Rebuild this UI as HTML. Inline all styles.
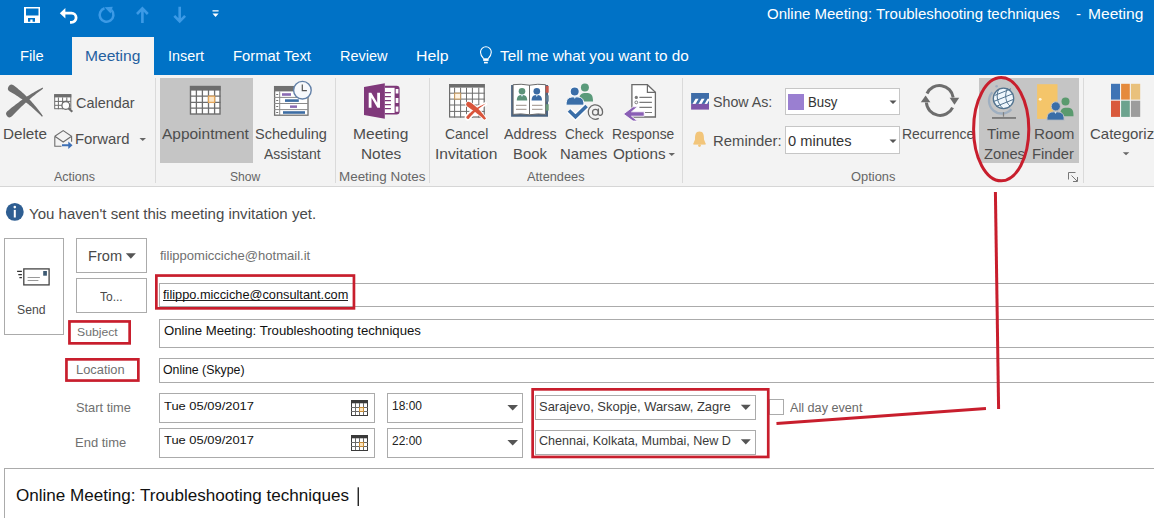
<!DOCTYPE html>
<html><head><meta charset="utf-8"><style>
html,body{margin:0;padding:0;width:1154px;height:518px;overflow:hidden;background:#fff;}
body{position:relative;font-family:"Liberation Sans",sans-serif;}
.b{position:absolute;}
.t{position:absolute;white-space:nowrap;transform-origin:0 0;}
svg{position:absolute;left:0;top:0;}
</style></head><body>
<div class="b" style="left:0px;top:0px;width:1154px;height:75px;background:#0072C6"></div>
<div class="b" style="left:72px;top:37px;width:82px;height:38px;background:#F3F3F3"></div>
<div class="b" style="left:0px;top:75px;width:1154px;height:111px;background:#F3F3F3"></div>
<div class="b" style="left:0px;top:186px;width:1154px;height:1px;background:#D6D6D6"></div>
<div class="b" style="left:155px;top:78px;width:1px;height:105px;background:#DADADA"></div>
<div class="b" style="left:335px;top:78px;width:1px;height:105px;background:#DADADA"></div>
<div class="b" style="left:429px;top:78px;width:1px;height:105px;background:#DADADA"></div>
<div class="b" style="left:682px;top:78px;width:1px;height:105px;background:#DADADA"></div>
<div class="b" style="left:1083px;top:78px;width:1px;height:105px;background:#DADADA"></div>
<div class="b" style="left:160px;top:78px;width:93px;height:85px;background:#C5C5C5"></div>
<div class="b" style="left:979px;top:78px;width:100px;height:85px;background:#C5C5C5"></div>
<div class="b" style="left:785px;top:88px;width:115px;height:27px;background:#fff;border:1px solid #C6C6C6;box-sizing:border-box"></div>
<div class="b" style="left:785px;top:126px;width:115px;height:28px;background:#fff;border:1px solid #C6C6C6;box-sizing:border-box"></div>
<div class="b" style="left:788px;top:94px;width:16px;height:16px;background:#9A7FD1"></div>
<div class="b" style="left:4px;top:238px;width:60px;height:97px;box-sizing:border-box;background:#fff;border:1px solid #ABABAB"></div>
<div class="b" style="left:76px;top:238px;width:71px;height:35px;box-sizing:border-box;background:#fff;border:1px solid #ABABAB"></div>
<div class="b" style="left:76px;top:278px;width:71px;height:35px;box-sizing:border-box;background:#fff;border:1px solid #ABABAB"></div>
<div class="b" style="left:159px;top:283px;width:1000px;height:24px;box-sizing:border-box;background:#fff;border:1px solid #ABABAB"></div>
<div class="b" style="left:159px;top:319px;width:1000px;height:29px;box-sizing:border-box;background:#fff;border:1px solid #ABABAB"></div>
<div class="b" style="left:159px;top:358px;width:1000px;height:25px;box-sizing:border-box;background:#fff;border:1px solid #ABABAB"></div>
<div class="b" style="left:159px;top:393px;width:216px;height:30px;box-sizing:border-box;background:#fff;border:1px solid #ABABAB"></div>
<div class="b" style="left:159px;top:428px;width:216px;height:30px;box-sizing:border-box;background:#fff;border:1px solid #ABABAB"></div>
<div class="b" style="left:387px;top:393px;width:136px;height:30px;box-sizing:border-box;background:#fff;border:1px solid #ABABAB"></div>
<div class="b" style="left:387px;top:428px;width:136px;height:30px;box-sizing:border-box;background:#fff;border:1px solid #ABABAB"></div>
<div class="b" style="left:535px;top:395px;width:221px;height:25px;box-sizing:border-box;background:#fff;border:1px solid #ABABAB"></div>
<div class="b" style="left:535px;top:430px;width:221px;height:25px;box-sizing:border-box;background:#fff;border:1px solid #ABABAB"></div>
<div class="b" style="left:769px;top:399px;width:15px;height:16px;box-sizing:border-box;background:#fff;border:1px solid #ABABAB"></div>
<div class="b" style="left:163px;top:300px;width:184.6px;height:1.1px;background:#222"></div>
<div class="b" style="left:4px;top:468px;width:1160px;height:60px;box-sizing:border-box;border:1px solid #ABABAB;border-right:none;border-bottom:none"></div>
<div class="t" style="left:767.00px;top:6.00px;font-size:15px;line-height:15px;color:#ffffff;">Online Meeting: Troubleshooting techniques</div>
<div class="t" style="left:1076.00px;top:6.00px;font-size:15px;line-height:15px;color:#ffffff;">-</div>
<div class="t" style="left:1087.96px;top:6.00px;font-size:15px;line-height:15px;color:#ffffff;transform:scaleX(1.0380);">Meeting</div>
<div class="t" style="left:20.32px;top:48.00px;font-size:15px;line-height:15px;color:#ffffff;transform:scaleX(0.9813);">File</div>
<div class="t" style="left:84.56px;top:48.00px;font-size:15px;line-height:15px;color:#2560A0;transform:scaleX(1.0380);">Meeting</div>
<div class="t" style="left:168.04px;top:48.00px;font-size:15px;line-height:15px;color:#ffffff;transform:scaleX(0.9586);">Insert</div>
<div class="t" style="left:232.91px;top:48.00px;font-size:15px;line-height:15px;color:#ffffff;transform:scaleX(0.9872);">Format Text</div>
<div class="t" style="left:340.33px;top:48.00px;font-size:15px;line-height:15px;color:#ffffff;transform:scaleX(0.9679);">Review</div>
<div class="t" style="left:416.04px;top:48.00px;font-size:15px;line-height:15px;color:#ffffff;transform:scaleX(1.0574);">Help</div>
<div class="t" style="left:499.50px;top:48.00px;font-size:15px;line-height:15px;color:#ffffff;transform:scaleX(1.0203);">Tell me what you want to do</div>
<div class="t" style="left:2.58px;top:126.00px;font-size:15px;line-height:15px;color:#4d4d4d;transform:scaleX(1.0163);">Delete</div>
<div class="t" style="left:76.00px;top:95.00px;font-size:15px;line-height:15px;color:#4d4d4d;transform:scaleX(0.9626);">Calendar</div>
<div class="t" style="left:75.41px;top:131.00px;font-size:15px;line-height:15px;color:#4d4d4d;transform:scaleX(0.9912);">Forward</div>
<div class="t" style="left:54.40px;top:171.00px;font-size:12px;line-height:12px;color:#666666;transform:scaleX(1.0419);">Actions</div>
<div class="t" style="left:162.20px;top:126.00px;font-size:15px;line-height:15px;color:#4d4d4d;transform:scaleX(1.0311);">Appointment</div>
<div class="t" style="left:255.40px;top:126.00px;font-size:15px;line-height:15px;color:#4d4d4d;transform:scaleX(0.9691);">Scheduling</div>
<div class="t" style="left:263.50px;top:146.00px;font-size:15px;line-height:15px;color:#4d4d4d;transform:scaleX(0.9321);">Assistant</div>
<div class="t" style="left:230.00px;top:171.00px;font-size:12px;line-height:12px;color:#666666;transform:scaleX(1.0115);">Show</div>
<div class="t" style="left:352.96px;top:126.00px;font-size:15px;line-height:15px;color:#4d4d4d;transform:scaleX(1.0380);">Meeting</div>
<div class="t" style="left:360.97px;top:146.00px;font-size:15px;line-height:15px;color:#4d4d4d;transform:scaleX(1.0269);">Notes</div>
<div class="t" style="left:339.00px;top:171.00px;font-size:12px;line-height:12px;color:#666666;transform:scaleX(1.1180);">Meeting Notes</div>
<div class="t" style="left:445.00px;top:126.00px;font-size:15px;line-height:15px;color:#4d4d4d;transform:scaleX(0.9275);">Cancel</div>
<div class="t" style="left:434.96px;top:146.00px;font-size:15px;line-height:15px;color:#4d4d4d;transform:scaleX(1.0393);">Invitation</div>
<div class="t" style="left:503.50px;top:126.00px;font-size:15px;line-height:15px;color:#4d4d4d;transform:scaleX(0.9555);">Address</div>
<div class="t" style="left:513.01px;top:146.00px;font-size:15px;line-height:15px;color:#4d4d4d;transform:scaleX(0.9944);">Book</div>
<div class="t" style="left:565.00px;top:126.00px;font-size:15px;line-height:15px;color:#4d4d4d;transform:scaleX(0.9066);">Check</div>
<div class="t" style="left:560.01px;top:146.00px;font-size:15px;line-height:15px;color:#4d4d4d;transform:scaleX(0.9910);">Names</div>
<div class="t" style="left:612.08px;top:126.00px;font-size:15px;line-height:15px;color:#4d4d4d;transform:scaleX(0.9214);">Response</div>
<div class="t" style="left:613.00px;top:146.00px;font-size:15px;line-height:15px;color:#4d4d4d;transform:scaleX(1.0157);">Options</div>
<div class="t" style="left:527.00px;top:171.00px;font-size:12px;line-height:12px;color:#666666;transform:scaleX(1.0659);">Attendees</div>
<div class="t" style="left:713.00px;top:94.00px;font-size:15px;line-height:15px;color:#4d4d4d;transform:scaleX(0.9486);">Show As:</div>
<div class="t" style="left:807.72px;top:94.00px;font-size:15px;line-height:15px;color:#333333;transform:scaleX(0.8829);">Busy</div>
<div class="t" style="left:712.61px;top:133.00px;font-size:15px;line-height:15px;color:#4d4d4d;transform:scaleX(0.9907);">Reminder:</div>
<div class="t" style="left:788.40px;top:133.00px;font-size:15px;line-height:15px;color:#333333;transform:scaleX(0.9763);">0 minutes</div>
<div class="t" style="left:851.00px;top:171.00px;font-size:12px;line-height:12px;color:#666666;transform:scaleX(1.0736);">Options</div>
<div class="t" style="left:902.47px;top:126.00px;font-size:15px;line-height:15px;color:#4d4d4d;transform:scaleX(0.9319);">Recurrence</div>
<div class="t" style="left:987.00px;top:126.00px;font-size:15px;line-height:15px;color:#4d4d4d;transform:scaleX(1.0082);">Time</div>
<div class="t" style="left:983.80px;top:146.00px;font-size:15px;line-height:15px;color:#4d4d4d;transform:scaleX(0.9833);">Zones</div>
<div class="t" style="left:1033.69px;top:126.00px;font-size:15px;line-height:15px;color:#4d4d4d;transform:scaleX(1.0125);">Room</div>
<div class="t" style="left:1032.01px;top:146.00px;font-size:15px;line-height:15px;color:#4d4d4d;transform:scaleX(0.9874);">Finder</div>
<div class="t" style="left:1090.00px;top:126.00px;font-size:15px;line-height:15px;color:#4d4d4d;">Categorize</div>
<div class="t" style="left:29.30px;top:207.00px;font-size:14.7px;line-height:14.7px;color:#4a4a4a;transform:scaleX(1.0229);">You haven't sent this meeting invitation yet.</div>
<div class="t" style="left:87.59px;top:249.00px;font-size:14.5px;line-height:14.5px;color:#4a4a4a;transform:scaleX(1.0076);">From</div>
<div class="t" style="left:160.00px;top:250.00px;font-size:12.4px;line-height:12.4px;color:#707070;transform:scaleX(1.0524);">filippomicciche@hotmail.it</div>
<div class="t" style="left:100.10px;top:291.00px;font-size:12.5px;line-height:12.5px;color:#4a4a4a;transform:scaleX(0.9591);">To...</div>
<div class="t" style="left:163.00px;top:289.00px;font-size:12.8px;line-height:12.8px;color:#111111;transform:scaleX(0.9970);">filippo.micciche@consultant.com</div>
<div class="t" style="left:76.50px;top:327.00px;font-size:11.8px;line-height:11.8px;color:#707070;transform:scaleX(1.0332);">Subject</div>
<div class="t" style="left:163.80px;top:325.00px;font-size:12.9px;line-height:12.9px;color:#111111;transform:scaleX(1.0214);">Online Meeting: Troubleshooting techniques</div>
<div class="t" style="left:76.40px;top:364.00px;font-size:12px;line-height:12px;color:#707070;transform:scaleX(1.0717);">Location</div>
<div class="t" style="left:163.00px;top:364.00px;font-size:12.5px;line-height:12.5px;color:#111111;transform:scaleX(0.9866);">Online (Skype)</div>
<div class="t" style="left:76.40px;top:402.00px;font-size:12.4px;line-height:12.4px;color:#707070;transform:scaleX(1.0353);">Start time</div>
<div class="t" style="left:75.33px;top:437.00px;font-size:12.2px;line-height:12.2px;color:#707070;transform:scaleX(1.0651);">End time</div>
<div class="t" style="left:163.60px;top:401.00px;font-size:11.8px;line-height:11.8px;color:#111111;transform:scaleX(1.0937);">Tue 05/09/2017</div>
<div class="t" style="left:163.60px;top:435.00px;font-size:11.8px;line-height:11.8px;color:#111111;transform:scaleX(1.0937);">Tue 05/09/2017</div>
<div class="t" style="left:391.90px;top:400.00px;font-size:12.1px;line-height:12.1px;color:#222222;transform:scaleX(0.9889);">18:00</div>
<div class="t" style="left:391.90px;top:435.00px;font-size:12.1px;line-height:12.1px;color:#222222;transform:scaleX(0.9889);">22:00</div>
<div class="b" style="left:539.00px;top:397.00px;width:192.20px;height:20.2px;overflow:hidden"><div class="t" style="left:0.00px;top:4px;font-size:12.2px;line-height:12.2px;color:#3a3a3a;transform:scaleX(1.0630);">Sarajevo, Skopje, Warsaw, Zagreb</div></div>
<div class="b" style="left:539.00px;top:431.00px;width:192.20px;height:20.2px;overflow:hidden"><div class="t" style="left:0.00px;top:4px;font-size:12.2px;line-height:12.2px;color:#3a3a3a;transform:scaleX(1.0300);">Chennai, Kolkata, Mumbai, New Delhi</div></div>
<div class="t" style="left:789.60px;top:402.00px;font-size:12px;line-height:12px;color:#6a6a6a;transform:scaleX(1.0537);">All day event</div>
<div class="t" style="left:17.30px;top:304.00px;font-size:12.6px;line-height:12.6px;color:#4a4a4a;transform:scaleX(0.9691);">Send</div>
<div class="t" style="left:15.50px;top:488.00px;font-size:16.8px;line-height:16.8px;color:#111111;transform:scaleX(1.0172);">Online Meeting: Troubleshooting techniques</div>
<svg width="1154" height="518" viewBox="0 0 1154 518">
<!-- QAT: save -->
<g fill="#fff">
<path d="M24 7h16v16h-16z M26 8.5v7h12.5v-7z M28 18v3.8h2.3v-2.3h2.3v2.3h2.4v-3.8z" fill-rule="evenodd"/>
</g>
<!-- undo -->
<path d="M62 13.2h9.5a4.6 4.6 0 0 1 0 9.2h-1.5" fill="none" stroke="#fff" stroke-width="2.8"/>
<path d="M59.8 13.2l5.6-5.3v10.6z" fill="#fff"/>
<!-- redo faded -->
<path d="M111.6 10.2 A 6.9 6.9 0 1 1 104.5 8.3" fill="none" stroke="#3C9AE6" stroke-width="2.5"/>
<path d="M104.6 7.2 L112.8 6.8 L110.6 13.6z" fill="#3C9AE6"/>
<!-- up/down faded -->
<g stroke="#3C9AE6" stroke-width="2.6" fill="none">
<path d="M142.4 8.5v14.5 M137 14l5.4-5.6 5.4 5.6"/>
<path d="M179.7 6.7v14.5 M174.3 15.9l5.4 5.6 5.4-5.6"/>
</g>
<!-- customize -->
<path d="M212.5 10.3h6.1v1.3h-6.1z M212.5 13.6h6.1l-3.05 3.4z" fill="#fff"/>

<!-- bulb -->
<path d="M483.6 58.6 C 482 56.8, 480.5 55, 480.5 52.2 A 5.4 5.4 0 0 1 491.3 52.2 C 491.3 55, 489.8 56.8, 488.2 58.6" fill="none" stroke="#fff" stroke-width="1.1"/>
<rect x="483.2" y="58.3" width="5.4" height="2.6" fill="#fff"/>
<rect x="484" y="61.8" width="3.8" height="1.6" fill="#fff"/>

<!-- Delete X -->
<path d="M9.67 91.44 L11.00 92.19 L12.33 92.96 L13.66 93.76 L14.99 94.58 L16.32 95.43 L17.66 96.31 L19.00 97.21 L20.34 98.14 L21.68 99.10 L23.02 100.08 L24.36 101.09 L25.71 102.13 L27.05 103.19 L28.40 104.28 L29.75 105.40 L31.10 106.55 L32.45 107.72 L33.80 108.92 L35.16 110.14 L36.51 111.40 L37.87 112.68 L39.22 113.99 L40.58 115.32 L41.94 116.69 L42.86 115.91 L41.73 114.34 L40.60 112.79 L39.45 111.26 L38.30 109.76 L37.14 108.29 L35.97 106.85 L34.80 105.43 L33.61 104.03 L32.42 102.66 L31.22 101.32 L30.01 100.01 L28.79 98.72 L27.57 97.46 L26.33 96.22 L25.09 95.02 L23.84 93.83 L22.58 92.68 L21.32 91.55 L20.04 90.45 L18.75 89.38 L17.46 88.33 L16.16 87.31 L14.85 86.32 L13.53 85.36 A 3.60 3.60 0 0 0 9.67 91.44 Z" fill="#6F6F6F"/>
<path d="M11.96 116.25 L13.15 114.97 L14.36 113.70 L15.57 112.45 L16.79 111.20 L18.02 109.97 L19.26 108.74 L20.51 107.53 L21.77 106.33 L23.04 105.14 L24.31 103.96 L25.59 102.79 L26.89 101.64 L28.19 100.49 L29.50 99.35 L30.82 98.23 L32.15 97.12 L33.48 96.02 L34.83 94.93 L36.19 93.85 L37.55 92.78 L38.93 91.72 L40.31 90.67 L41.71 89.64 L43.11 88.61 L42.49 87.59 L40.93 88.39 L39.39 89.22 L37.85 90.05 L36.31 90.91 L34.79 91.78 L33.27 92.66 L31.76 93.56 L30.25 94.48 L28.76 95.42 L27.27 96.37 L25.79 97.33 L24.31 98.31 L22.85 99.31 L21.39 100.33 L19.94 101.36 L18.50 102.40 L17.06 103.47 L15.64 104.54 L14.22 105.64 L12.81 106.75 L11.40 107.87 L10.01 109.02 L8.62 110.17 L7.24 111.35 A 3.40 3.40 0 0 0 11.96 116.25 Z" fill="#6F6F6F"/>

<!-- Calendar small w/ magnifier -->
<rect x="54.7" y="94.7" width="16.1" height="14" fill="#fff" stroke="#6D6D6D" stroke-width="1"/>
<rect x="54.2" y="94.2" width="17.1" height="3.2" fill="#6D6D6D"/>
<g fill="none" stroke="#6D6D6D" stroke-width="1">
<path d="M58.4 97.4v11.8 M62.6 97.4v11.8 M66.8 97.4v4 M54.8 101.4h16 M54.8 105.3h8"/>
</g>
<circle cx="65.8" cy="105.4" r="3.9" stroke="#6D6D6D" stroke-width="1.3" fill="#fff"/>
<path d="M68.5 108.2l3.8 3.6" stroke="#6D6D6D" stroke-width="2.2"/>

<!-- Forward envelope -->
<g fill="none" stroke="#6D6D6D" stroke-width="1.1">
<path d="M54.8 136.3 L63.2 130.6 L71.6 136.3 V141.8 M54.8 136.3 V146.2 H61.5 M54.8 136.3 L63.2 142 L71.6 136.3"/>
</g>
<path d="M62 144.3h6.3v-2.8l4.2 3.8-4.2 3.8v-2.8h-6.3z" fill="#3D6FB5"/>

<!-- Appointment calendar -->
<rect x="190.5" y="86.5" width="29.5" height="27.5" fill="#fff" stroke="#6D6D6D" stroke-width="1.4"/>
<rect x="190" y="86" width="30.5" height="4.6" fill="#6D6D6D"/>
<g stroke="#6D6D6D" stroke-width="1.3">
<path d="M196.4 90v24 M202.4 90v24 M208.5 90v24 M214.6 90v24 M190 96.2h30.5 M190 102.4h30.5 M190 108.2h30.5"/>
</g>
<rect x="208.5" y="96.2" width="6.1" height="6.2" fill="#FDE6C6" stroke="#E4A75C" stroke-width="1.3"/>

<!-- Scheduling assistant -->
<rect x="274.6" y="86.6" width="33.4" height="28.6" fill="#fff" stroke="#707070" stroke-width="1.3"/>
<rect x="274" y="86.1" width="20" height="5.3" fill="#707070"/>
<g stroke="#8A8A8A" stroke-width="1">
<path d="M274 97.4h34 M274 103.5h34 M274 109.6h34 M279.7 91.4v24"/>
</g>
<g stroke="#707070" stroke-width="1">
<path d="M276.2 94.5h2 M276.2 100.5h2 M276.2 106.5h2 M276.2 112.5h2"/>
</g>
<rect x="282" y="93.2" width="9" height="2.6" fill="#8B6BB3"/>
<rect x="285" y="99.3" width="13.8" height="2.6" fill="#3D6DA3"/>
<rect x="290" y="105.4" width="7" height="2.5" fill="#8B6BB3"/>
<rect x="283" y="111.2" width="22" height="2.6" fill="#3D6DA3"/>
<circle cx="302.4" cy="90.2" r="8.8" fill="#F7F9FC" stroke="#6381A8" stroke-width="1.4"/>
<path d="M302.3 84.6v6h4.6" stroke="#555" stroke-width="1.2" fill="none"/>

<!-- OneNote -->
<path d="M384.8 85.8h11.8a3 3 0 0 1 3 3v22.6a3 3 0 0 1 -3 3h-11.8z" fill="#7E3878"/>
<rect x="384.8" y="87.8" width="9.8" height="25.2" fill="#fff"/>
<g stroke="#7E3878" stroke-width="1.3">
<path d="M384.8 92.7h6.1 M384.8 96.6h6.1 M384.8 100.6h6.1 M384.8 104.6h6.1 M384.8 108.6h6.1"/>
</g>
<path d="M395.7 89.1h2.7v4.4h-2.7z M395.7 98h2.7v4.9h-2.7z M395.7 106.4h2.7v5.3h-2.7z" fill="#fff"/>
<path d="M364 87 L384.8 83.2 V118.7 L364 115z" fill="#80397B"/>
<path d="M368.7 107.8V92.7h2.6l5.9 10v-10h2.8v15.1h-2.6l-5.9-10v10z" fill="#fff"/>

<!-- Cancel invitation -->
<rect x="449.6" y="84.6" width="34.6" height="32.4" fill="#fff" stroke="#6D6D6D" stroke-width="1.2"/>
<rect x="449.1" y="84.1" width="35.6" height="3.5" fill="#6D6D6D"/>
<g stroke="#6D6D6D" stroke-width="1">
<path d="M454.6 87.6v30 M460.6 87.6v30 M466.5 87.6v30 M472.4 87.6v30 M478.8 87.6v30 M449.1 93.2h35.6 M449.1 99.1h35.6 M449.1 105h35.6 M449.1 111.4h35.6"/>
</g>
<rect x="454.6" y="93.2" width="6" height="5.9" fill="#FFF3E3" stroke="#C49A62" stroke-width="1.1"/>
<path d="M467.20 106.43 L467.86 106.86 L468.54 107.30 L469.21 107.75 L469.89 108.20 L470.57 108.67 L471.26 109.15 L471.95 109.64 L472.65 110.15 L473.35 110.66 L474.06 111.18 L474.77 111.72 L475.49 112.27 L476.21 112.83 L476.94 113.41 L477.68 113.99 L478.41 114.59 L479.16 115.20 L479.91 115.83 L480.67 116.46 L481.43 117.11 L482.20 117.78 L482.97 118.45 L483.75 119.15 L484.54 119.85 L486.06 118.55 L485.46 117.65 L484.86 116.77 L484.25 115.91 L483.63 115.07 L483.00 114.24 L482.36 113.44 L481.72 112.65 L481.07 111.88 L480.42 111.12 L479.76 110.39 L479.09 109.68 L478.41 108.98 L477.73 108.30 L477.04 107.64 L476.34 107.01 L475.64 106.39 L474.93 105.79 L474.21 105.21 L473.49 104.65 L472.77 104.11 L472.03 103.60 L471.30 103.10 L470.55 102.62 L469.80 102.17 A 2.50 2.50 0 0 0 467.20 106.43 Z" fill="#D9553C" stroke="#fff" stroke-width="1.6" stroke-linejoin="round"/>
<path d="M469.61 118.97 L470.21 118.24 L470.81 117.53 L471.42 116.82 L472.04 116.12 L472.67 115.44 L473.31 114.76 L473.96 114.10 L474.61 113.44 L475.28 112.79 L475.95 112.16 L476.64 111.53 L477.33 110.91 L478.04 110.30 L478.76 109.70 L479.48 109.11 L480.22 108.53 L480.97 107.96 L481.73 107.40 L482.50 106.85 L483.29 106.31 L484.08 105.77 L484.89 105.25 L485.71 104.73 L486.54 104.22 L485.86 102.78 L484.92 103.12 L483.99 103.47 L483.06 103.85 L482.15 104.24 L481.24 104.66 L480.34 105.09 L479.45 105.53 L478.58 106.00 L477.71 106.48 L476.85 106.98 L476.00 107.50 L475.17 108.04 L474.34 108.59 L473.52 109.16 L472.72 109.75 L471.92 110.36 L471.14 110.98 L470.37 111.63 L469.61 112.28 L468.86 112.96 L468.12 113.65 L467.40 114.36 L466.68 115.09 L465.99 115.83 A 2.40 2.40 0 0 0 469.61 118.97 Z" fill="#D9553C" stroke="#fff" stroke-width="1.6" stroke-linejoin="round"/>
<path d="M467.20 106.43 L467.86 106.86 L468.54 107.30 L469.21 107.75 L469.89 108.20 L470.57 108.67 L471.26 109.15 L471.95 109.64 L472.65 110.15 L473.35 110.66 L474.06 111.18 L474.77 111.72 L475.49 112.27 L476.21 112.83 L476.94 113.41 L477.68 113.99 L478.41 114.59 L479.16 115.20 L479.91 115.83 L480.67 116.46 L481.43 117.11 L482.20 117.78 L482.97 118.45 L483.75 119.15 L484.54 119.85 L486.06 118.55 L485.46 117.65 L484.86 116.77 L484.25 115.91 L483.63 115.07 L483.00 114.24 L482.36 113.44 L481.72 112.65 L481.07 111.88 L480.42 111.12 L479.76 110.39 L479.09 109.68 L478.41 108.98 L477.73 108.30 L477.04 107.64 L476.34 107.01 L475.64 106.39 L474.93 105.79 L474.21 105.21 L473.49 104.65 L472.77 104.11 L472.03 103.60 L471.30 103.10 L470.55 102.62 L469.80 102.17 A 2.50 2.50 0 0 0 467.20 106.43 Z" fill="#D9553C"/>

<!-- Address book -->
<path d="M511.1 85 H548 V116.7 H511.1z" fill="#4B6482"/>
<path d="M513.1 84.7 Q521 83.6 529.5 85.2 Q538 83.6 545.6 84.7 V114.4 Q538 113.2 529.5 114.8 Q521 113.2 513.1 114.4z" fill="#fff" stroke="#6A6A6A" stroke-width="1"/>
<path d="M529.5 85v29.5" stroke="#6A6A6A" stroke-width="1"/>
<rect x="545.7" y="85.9" width="3" height="6.8" fill="#C9574B"/>
<rect x="545.7" y="95.3" width="3" height="6.3" fill="#5F7A8E"/>
<rect x="545.7" y="104.2" width="3" height="6.4" fill="#6A9A7A"/>
<circle cx="522" cy="91.2" r="3.3" fill="#5B9279"/>
<path d="M516.8 100.6 C 516.8 96, 519 95, 522 95 C 525 95, 527.2 96, 527.2 100.6z" fill="#5B9279"/>
<circle cx="536.8" cy="91.2" r="3.3" fill="#3B6BA3"/>
<path d="M531.6 100.6 C 531.6 96, 533.8 95, 536.8 95 C 539.8 95, 542 96, 542 100.6z" fill="#3B6BA3"/>
<path d="M520.8 95h2.4l-1.2 2z M535.6 95h2.4l-1.2 2z" fill="#CFE6F5"/>
<g stroke="#9A8F88" stroke-width="1">
<path d="M516 105.3h10.5 M516 109.3h10.5 M532 105.3h10.5 M532 109.3h10.5"/>
</g>

<!-- Check names -->
<circle cx="584.9" cy="87.5" r="4" fill="#5A9A7A"/>
<path d="M579 101.5 C 579 94, 581.5 93, 586 93 C 590.5 93, 593 94, 593 101.5z" fill="#5A9A7A"/>
<circle cx="574.7" cy="91.5" r="4.6" stroke="#fff" stroke-width="1.2" fill="#3A6EA8"/>
<path d="M566 105.2 C 566 98, 569 96.8, 575 96.8 C 581 96.8, 584 98, 584 105.2z" fill="#3A6EA8" stroke="#fff" stroke-width="1"/>
<path d="M573.6 97h2.4l-1.2 2z" fill="#D6EAF7"/>
<path d="M569 110.5 L575.5 116.8 L586.6 106" stroke="#fff" stroke-width="6" fill="none"/>
<path d="M569 110.5 L575.5 116.8 L586.6 106" stroke="#3A6EA8" stroke-width="3.6" fill="none"/>
<g fill="none" stroke="#6A6A6A" stroke-width="1.25">
<circle cx="595.4" cy="112.2" r="2.9"/>
<path d="M598.4 108.6 V113.6 C598.4 116.2 602.6 116.2 602.6 111.9 A 7.2 7.2 0 1 0 598.8 118.4"/>
</g>

<!-- Response options -->
<path d="M631.9 84.7 H647.4 L655.4 92.4 V117 H631.9z" fill="#fff" stroke="#6A6A6A" stroke-width="1.3"/>
<path d="M647.4 84.7 V92.4 H655.4" fill="none" stroke="#6A6A6A" stroke-width="1.2"/>
<circle cx="636.3" cy="97.4" r="1.6" fill="#7A7A7A"/>
<circle cx="636.3" cy="102.4" r="1.4" fill="none" stroke="#7A7A7A" stroke-width="1"/>
<g stroke="#7A7A7A" stroke-width="1.2">
<path d="M639.4 97.4h12.5 M639.4 102.4h12.5 M639.4 107.3h12.5 M645 112.5h7"/>
</g>
<path d="M623.5 114 L633 106.8 H637.5 L631.5 111.8 H644.2 V116.2 H631.5 L637.5 121 H633z" fill="#8A5FB5" stroke="#fff" stroke-width="0.8"/>

<!-- Show as icon -->
<rect x="691.1" y="93" width="17.9" height="10.9" fill="#3F6DA8"/>
<path d="M692.5 103.9 L695.6 98.8 H698.6 L695.5 103.9z M698.5 103.9 L701.6 98.8 H704.6 L701.5 103.9z M704.5 103.9 L707.6 98.8 H709 V100.5 L707 103.9z" fill="#fff"/>
<rect x="691.1" y="103.9" width="17.9" height="5.7" fill="#7D55A9"/>

<!-- Bell -->
<path d="M699.5 131.6 C 703.5 131.6, 704 135, 704 139.5 L705.5 143.3 H693.5 L695 139.5 C 695 135, 695.5 131.6, 699.5 131.6z" fill="#F2C57A"/>
<rect x="693.4" y="143" width="12.2" height="1.6" fill="#F2C57A"/>
<circle cx="699.5" cy="145.6" r="1.4" fill="#F2C57A"/>

<!-- ribbon dropdown arrows -->
<path d="M889.5 100.5h7l-3.5 3.5z M889.5 139.5h7l-3.5 3.5z" fill="#555"/>
<path d="M139.5 138h6.5l-3.25 3z" fill="#666"/>
<path d="M668.5 153h6.5l-3.25 3z" fill="#666"/>
<path d="M1122.8 152.2h6.5l-3.25 3z" fill="#666"/>

<!-- Recurrence -->
<g fill="none" stroke="#6D6D6D" stroke-width="3">
<path d="M927 93.5 A 13.8 13.8 0 0 1 953.2 97.5"/>
<path d="M952.6 107.6 A 13.8 13.8 0 0 1 926.4 102.5"/>
</g>
<path d="M949.6 97.8 H959.2 L954.5 104.8z" fill="#6D6D6D"/>
<path d="M920.8 102.2 H930.4 L925.6 95.4z" fill="#6D6D6D"/>

<!-- Globe -->
<path d="M992.3 92.2 A 12.8 12.8 0 0 0 1011.4 109.3" fill="none" stroke="#9FAFC0" stroke-width="2.4"/>
<circle cx="996.6" cy="86.2" r="1.3" fill="#9FAFC0"/>
<circle cx="1003.5" cy="98.4" r="10.2" fill="#EEF6FC" stroke="#52738F" stroke-width="1.3"/>
<g fill="none" stroke="#52738F" stroke-width="1">
<path d="M994.5 95.5 L1011 88.8 M993.6 101.5 L1013.2 93.6 M996 106.5 L1013.2 99.5"/>
<path d="M999 88.8 C 995 96, 998 104, 1003 108.5 M1007.5 88.3 C 1004 95, 1006 103, 1010 106"/>
</g>
<path d="M1003.5 112.2v4.5" stroke="#808080" stroke-width="1.2"/>
<rect x="992" y="117" width="24" height="1.9" fill="#7D7D7D"/>

<!-- Room finder -->
<rect x="1037.1" y="84.2" width="20.4" height="34.7" fill="#F4C56A"/>
<circle cx="1040.2" cy="99.3" r="1.4" fill="#FFF7DD"/>
<circle cx="1065.5" cy="101.5" r="4" fill="#5A9A6E"/>
<path d="M1060.2 116.2 C 1060.2 109, 1062 107.8, 1066.8 107.8 C 1071.6 107.8, 1073.5 109, 1073.5 116.2z" fill="#5A9A6E"/>
<circle cx="1055.8" cy="106.4" r="4.6" fill="#3A6EA8" stroke="#C5C5C5" stroke-width="1"/>
<path d="M1046.9 120.2 C 1046.9 113, 1049.5 111.8, 1055.5 111.8 C 1061.5 111.8, 1064.2 113, 1064.2 120.2z" fill="#3A6EA8" stroke="#C5C5C5" stroke-width="1"/>
<path d="M1054.3 111.8h2.4l-1.2 2.2z" fill="#D6EAF7"/>

<!-- Launcher -->
<g stroke="#777" stroke-width="1" fill="none">
<path d="M1068.5 179.5v-7h7"/>
<path d="M1071.5 175.5l5.5 5.5 M1077.5 177v4.5h-4.5"/>
</g>

<!-- Categorize -->
<rect x="1111" y="83.8" width="9" height="15.8" fill="#3F74B5"/>
<rect x="1121.1" y="83.8" width="8.7" height="15.8" fill="#E58A3C"/>
<rect x="1130.9" y="83.8" width="9.3" height="15.8" fill="#E9C17C"/>
<rect x="1111" y="100.7" width="9" height="16.2" fill="#D95A3C"/>
<rect x="1121.1" y="100.7" width="8.7" height="16.2" fill="#6CA38E"/>
<rect x="1130.9" y="100.7" width="9.3" height="16.2" fill="#9C9C9C"/>

<!-- info icon -->
<circle cx="14.8" cy="211.9" r="8.9" fill="#2E5E92"/>
<rect x="13.8" y="209.9" width="2" height="7.6" fill="#fff"/>
<circle cx="14.8" cy="207.1" r="1.3" fill="#fff"/>

<!-- Send envelope -->
<rect x="23.8" y="268.9" width="25.3" height="16" fill="#fff" stroke="#444" stroke-width="1.3"/>
<rect x="43.2" y="271" width="3.7" height="4.7" fill="#3D5A73"/>
<g stroke="#999" stroke-width="1"><path d="M27.6 277.5h12.3 M27.6 280.5h10.8"/></g>
<g stroke="#333" stroke-width="1.2"><path d="M17.1 271.4h4.8 M18.3 274.7h3.6 M19.4 277.6h2.5"/></g>

<!-- From arrow -->
<path d="M125.8 253.2h10.1l-5.05 5.5z" fill="#555"/>

<!-- small calendars in date fields -->
<g id="sc">
<rect x="351.5" y="400.5" width="16" height="15" fill="#fff" stroke="#3A3A3A" stroke-width="1"/>
<rect x="351" y="400" width="17" height="3.3" fill="#3A3A3A"/>
<g stroke="#6A6A6A" stroke-width="1">
<path d="M355.5 403v12 M359.5 403v12 M363.5 403v12 M351 407.5h17 M351 411.5h17"/>
</g>
<rect x="359.5" y="407.5" width="4" height="4" fill="#FBE3BC" stroke="#C98F3A" stroke-width="1"/>
</g>
<use href="#sc" x="0" y="35"/>

<!-- form dropdown arrows -->
<path d="M507.4 405h10.6l-5.3 5.6z M507.4 440h10.6l-5.3 5.6z" fill="#555"/>
<path d="M740.8 404.7h10l-5 5.2z M740.8 439.2h10l-5 5.2z" fill="#555"/>

<!-- body cursor -->
<rect x="357.6" y="487.3" width="1.3" height="18.7" fill="#111"/>

<!-- red annotations -->
<g fill="none" stroke="#C81E2D" stroke-width="2.7">
<rect x="156.35" y="275.55" width="197.60" height="32.80"/>
<rect x="69.45" y="321.45" width="60.20" height="21.90"/>
<rect x="66.45" y="359.35" width="71.90" height="21.20"/>
<rect x="532.65" y="389.35" width="235.60" height="67.60"/>
</g>
<g fill="none" stroke="#C81E2D" stroke-width="3">
<ellipse cx="1001.2" cy="129.2" rx="27.6" ry="51.6"/>
<path d="M995.4 192 L998.6 409"/>
<path d="M776.5 423.4 L986 408.4"/>
</g>
</svg>

</body></html>
